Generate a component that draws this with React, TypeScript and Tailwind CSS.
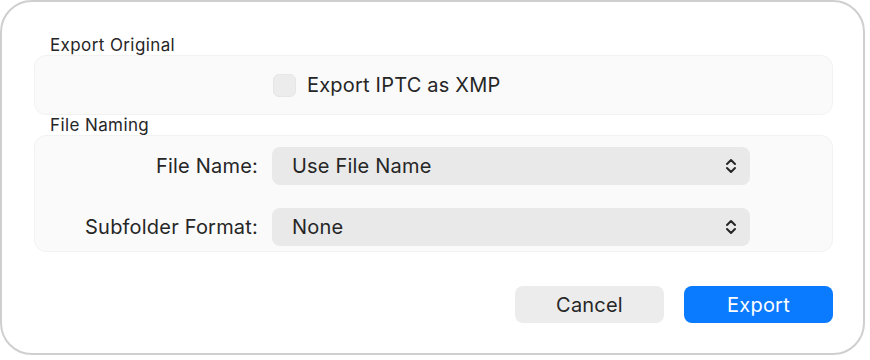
const Chevrons: React.FC = () => (
    <svg width="12" height="18" viewBox="0 0 12 18" fill="none">
        <path d="M2 7l4-4 4 4" stroke="#262626" strokeWidth="2" strokeLinecap="round" strokeLinejoin="round" />
        <path d="M2 11l4 4 4-4" stroke="#262626" strokeWidth="2" strokeLinecap="round" strokeLinejoin="round" />
    </svg>
)

const Popup: React.FC<{ value: string }> = ({ value }) => (
    <div className="w-[478px] h-[38px] rounded-[8px] bg-[#e9e9e9] flex items-center justify-between pl-[20px] pr-[13px]">
        <span className="text-[20px] leading-none tracking-[0.2px]">{value}</span>
        <Chevrons />
    </div>
)

const App: React.FC = () => {
    return (
        <div className="w-[870px] h-[360px] bg-white" style={{ fontFamily: "Inter, 'Liberation Sans', sans-serif" }}>
            <div className="w-[865px] h-[355px] border-2 border-[#cfcfcf] rounded-[32px] pl-[32px] pr-[30px] pt-[34px] text-[#262626]">
                <div className="pl-[16px] text-[17px] leading-[19px] tracking-[0.4px]">Export Original</div>
                <div className="h-[60px] rounded-[12px] bg-[#fafafa] border border-[#f2f2f2] flex items-center pl-[238px]">
                    <div className="w-[23px] h-[23px] rounded-[6px] bg-[#ececec] border border-[#e6e6e6]" />
                    <span className="ml-[11px] text-[20px] leading-none tracking-[0.2px]">Export IPTC as XMP</span>
                </div>
                <div className="mt-[1px] pl-[16px] text-[17px] leading-[19px] tracking-[0.4px]">File Naming</div>
                <div className="h-[117px] rounded-[12px] bg-[#fafafa] border border-[#f2f2f2] pt-[11px]">
                    <div className="flex items-center">
                        <div className="w-[223px] text-right text-[20px] leading-none tracking-[0.2px]">File Name:</div>
                        <div className="ml-[14px]">
                            <Popup value="Use File Name" />
                        </div>
                    </div>
                    <div className="flex items-center mt-[23px]">
                        <div className="w-[223px] text-right text-[20px] leading-none tracking-[0.2px]">Subfolder Format:</div>
                        <div className="ml-[14px]">
                            <Popup value="None" />
                        </div>
                    </div>
                </div>
                <div className="flex justify-end gap-[20px] mt-[34px]">
                    <button className="w-[149px] h-[37px] rounded-[8px] bg-[#ececec] text-[20px] tracking-[0.2px] text-[#262626]">Cancel</button>
                    <button className="w-[149px] h-[37px] rounded-[8px] bg-[#0a7aff] text-[20px] tracking-[0.2px] text-white">Export</button>
                </div>
            </div>
        </div>
    )
}

export default App
